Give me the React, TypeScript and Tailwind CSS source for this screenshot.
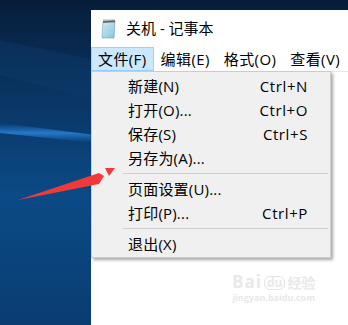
import React from "react";

const items: ({ label: string; key?: string } | "sep")[] = [
  { label: "新建(N)", key: "Ctrl+N" },
  { label: "打开(O)...", key: "Ctrl+O" },
  { label: "保存(S)", key: "Ctrl+S" },
  { label: "另存为(A)..." },
  "sep",
  { label: "页面设置(U)..." },
  { label: "打印(P)...", key: "Ctrl+P" },
  "sep",
  { label: "退出(X)" },
];

function NotepadIcon() {
  return (
    <svg width="15" height="20" viewBox="0 0 15 20">
      <defs>
        <linearGradient id="pad" x1="0" y1="0" x2="1" y2="1">
          <stop offset="0" stopColor="#d9f0f8" />
          <stop offset="1" stopColor="#7fc2dc" />
        </linearGradient>
      </defs>
      <path d="M2 3 L14 2 L13 19 L1 19 Z" fill="url(#pad)" stroke="#6d9fb5" strokeWidth="0.6" />
      <path d="M3 8 L12.5 7.6 M2.8 11 L12.4 10.6 M2.6 14 L12.2 13.6" stroke="#a6d4e6" strokeWidth="0.8" />
      <path d="M2 3.2 L14 2.2" stroke="#555" strokeWidth="1.2" />
      {[3, 5, 7, 9, 11, 13].map((x) => (
        <rect key={x} x={x - 0.5} y={0.5} width="1" height="3.2" fill="#666" />
      ))}
    </svg>
  );
}

export default function App() {
  return (
    <div className="relative w-[348px] h-[325px] overflow-hidden flex font-['Open_Sans','Noto_Sans_CJK_SC',sans-serif] text-black bg-[#0a3f75]">
      <svg className="absolute inset-0" width="348" height="325" viewBox="0 0 348 325">
        <defs>
          <linearGradient id="wall" x1="0" y1="0" x2="0" y2="1">
            <stop offset="0" stopColor="#061d3a" />
            <stop offset="0.3" stopColor="#0a3564" />
            <stop offset="0.6" stopColor="#0b4a86" />
            <stop offset="1" stopColor="#0a3d72" />
          </linearGradient>
          <linearGradient id="streak" x1="0" y1="0" x2="0" y2="1">
            <stop offset="0" stopColor="#1b6fc4" stopOpacity="0" />
            <stop offset="0.5" stopColor="#2a7fd4" stopOpacity="0.9" />
            <stop offset="1" stopColor="#1b6fc4" stopOpacity="0" />
          </linearGradient>
        </defs>
        <rect width="348" height="325" fill="url(#wall)" />
        <path d="M0 123 L95 135 L95 143 L0 133 Z" fill="url(#streak)" />
        <path d="M0 40 L95 60 L95 100 L0 75 Z" fill="#0d3f74" opacity="0.35" />
      </svg>

      <div className="relative ml-[91px] mt-[10px] flex-1 bg-white flex flex-col">
        <div className="h-[37px] flex items-center pl-[10px] gap-[10px]">
          <NotepadIcon />
          <span className="text-[15px] leading-none">关机 - 记事本</span>
        </div>
        <div className="h-[24px] flex items-stretch text-[15px] leading-none tracking-[0.4px]">
          <div className="flex items-center px-[6px] border border-[#99d1ff] bg-[#cce8ff]">文件(F)</div>
          <div className="flex items-center px-[6px] border border-transparent">编辑(E)</div>
          <div className="flex items-center px-[6px] border border-transparent">格式(O)</div>
          <div className="flex items-center px-[6px] border border-transparent">查看(V)</div>
        </div>
        <div className="relative flex-1 border-t border-[#e8e8e8]">
          <div className="absolute left-0 top-[-1px] w-[240px] bg-[#f0f0f0] border border-[#cccccc] pt-[2px] pb-[1px] shadow-[2px_2px_3px_rgba(0,0,0,0.35)] text-[15px] leading-none">
            {items.map((it, i) =>
              it === "sep" ? (
                <div key={i} className="h-[7px] flex items-center ml-[31px] mr-[2px]">
                  <div className="h-px w-full bg-[#cfcfcf]" />
                </div>
              ) : (
                <div key={i} className="h-[24px] flex items-center justify-between pl-[36px] pr-[22px]">
                  <span className="tracking-[0.2px]">{it.label}</span>
                  {it.key && <span className="tracking-[0.6px]">{it.key}</span>}
                </div>
              )
            )}
          </div>
          <div className="absolute left-[141px] top-[201px] flex flex-col items-center text-[#e9e9e9] leading-none">
            <div className="flex items-end gap-[2px] font-bold">
              <span className="text-[17px] tracking-[1px]">Bai</span>
              <span className="relative text-[12px] border border-[#e3e3e3] rounded-[6px] px-[2px]">du</span>
              <span className="text-[14px]">经验</span>
            </div>
            <span className="text-[9px] mt-[3px] font-bold">jingyan.baidu.com</span>
          </div>
        </div>
      </div>

      <svg className="absolute inset-0 pointer-events-none" width="348" height="325" viewBox="0 0 348 325">
        <polygon points="18,200 99,173 104,176 99,184" fill="#f2393a" />
        <polygon points="105,168 115,168 109,176" fill="#f2393a" />
      </svg>
    </div>
  );
}
